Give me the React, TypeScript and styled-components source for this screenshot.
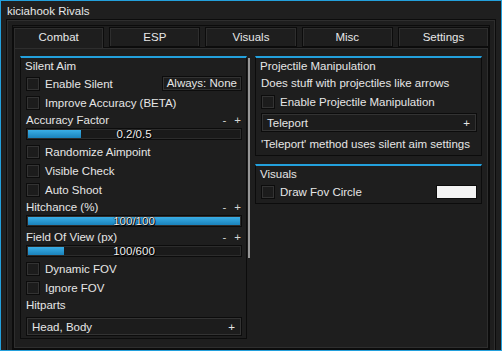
import React from 'react';
import styled, { createGlobalStyle } from 'styled-components';

const BLUE = '#23a0dc';
const LINE = '#0c0c0c';
const EDGE = '#2e2e2e';

const GlobalStyle = createGlobalStyle`
    html, body {
        margin: 0;
        padding: 0;
        background: #1f1f1f;
    }
    * {
        box-sizing: border-box;
    }
`;

const Window = styled.div`
    width: 502px;
    height: 351px;
    border: 1px solid ${BLUE};
    background: #1f1f1f;
    display: flex;
    flex-direction: column;
    font-family: 'Liberation Sans', Arial, sans-serif;
    font-size: 11.5px;
    color: #e6e6e6;
    overflow: hidden;
`;

const TitleBar = styled.div`
    height: 18px;
    line-height: 20px;
    padding-left: 6px;
    color: #e8e8e8;
`;

const Body = styled.div`
    flex: 1;
    margin: 0 5px 4px 5px;
    border: 1px solid ${LINE};
    box-shadow: inset 0 0 0 1px ${EDGE};
    background: #1e1e1e;
    padding: 5px;
    display: flex;
`;

const TabFrame = styled.div`
    flex: 1;
    border: 1px solid ${LINE};
    background: #1e1e1e;
    padding-top: 1px;
    display: flex;
    flex-direction: column;
`;

const TabRow = styled.div`
    display: flex;
    gap: 5px;
    height: 21px;
`;

const Tab = styled.div<{ $active?: boolean }>`
    flex: 1;
    height: ${(p) => (p.$active ? '21px' : '20px')};
    border: 1px solid ${LINE};
    border-bottom: ${(p) => (p.$active ? 'none' : `1px solid ${LINE}`)};
    box-shadow: inset 1px 1px 0 ${EDGE}, inset -1px 0 0 ${EDGE};
    background: #1e1e1e;
    text-align: center;
    line-height: 19px;
    color: #e8e8e8;
    position: relative;
    z-index: ${(p) => (p.$active ? 1 : 0)};
`;

const Content = styled.div`
    flex: 1;
    margin-top: -1px;
    border: 1px solid ${LINE};
    box-shadow: inset 0 0 0 1px ${EDGE};
    background: #1e1e1e;
    padding: 8px 6px 9px 6px;
    display: flex;
    gap: 5px;
    min-height: 0;
`;

const LeftColumn = styled.div`
    display: flex;
    width: 230px;
    min-height: 0;
`;

const ScrollArea = styled.div`
    width: 227px;
    overflow: hidden;
`;

const ScrollTrack = styled.div`
    width: 3px;
    padding-top: 2px;
`;

const ScrollThumb = styled.div`
    width: 2px;
    margin-left: 1px;
    height: 200px;
    background: #969696;
`;

const RightColumn = styled.div`
    width: 227px;
    display: flex;
    flex-direction: column;
    gap: 8px;
`;

const Section = styled.div`
    border: 1px solid ${LINE};
    border-top: 2px solid ${BLUE};
    background: #1e1e1e;
    padding: 0 4px 2px 5px;
    display: flex;
    flex-direction: column;
`;

const SectionTitle = styled.div`
    height: 16px;
    line-height: 16px;
    margin-left: -1px;
`;

const Text = styled.div<{ $h?: number; $mt?: number }>`
    height: ${(p) => p.$h ?? 16}px;
    line-height: ${(p) => p.$h ?? 16}px;
    margin-top: ${(p) => p.$mt ?? 0}px;
    white-space: nowrap;
`;

const CheckRow = styled.div`
    height: 19px;
    display: flex;
    align-items: center;
    gap: 5px;
`;

const Box = styled.div`
    width: 14px;
    height: 14px;
    flex: none;
    border: 1px solid ${LINE};
    box-shadow: inset 0 0 0 1px #333;
    background: #1c1c1c;
`;

const Label = styled.span`
    flex: 1;
    white-space: nowrap;
`;

const Pill = styled.div`
    height: 15px;
    padding: 0 4px;
    border: 1px solid ${LINE};
    box-shadow: inset 0 0 0 1px #333;
    background: #1c1c1c;
    line-height: 13px;
    text-align: center;
`;

const Swatch = styled.div`
    width: 41px;
    height: 14px;
    border: 1px solid ${LINE};
    background: #f3f3f3;
`;

const SliderHead = styled.div`
    height: 16px;
    display: flex;
    align-items: center;
    justify-content: space-between;
`;

const Steps = styled.span`
    display: flex;
    gap: 8px;
    color: #d6d6d6;
    padding-right: 1px;
`;

const Track = styled.div`
    height: 12px;
    margin-bottom: 2px;
    border: 1px solid ${LINE};
    box-shadow: inset 0 0 0 1px #2c2c2c;
    background: #1a1a1a;
    padding: 1px;
    position: relative;
`;

const Fill = styled.div`
    height: 100%;
    background: linear-gradient(#3aaee6, #1a82bb);
`;

const TrackText = styled.div`
    position: absolute;
    inset: 0;
    text-align: center;
    line-height: 11px;
    color: #f2f2f2;
    text-shadow: 0 0 1px #000, 0 0 1px #000, 1px 1px 0 #000;
`;

const Select = styled.div<{ $h?: number; $mt?: number }>`
    height: ${(p) => p.$h ?? 19}px;
    margin-top: ${(p) => p.$mt ?? 0}px;
    border: 1px solid ${LINE};
    box-shadow: inset 0 0 0 1px #333;
    background: #1c1c1c;
    display: flex;
    align-items: center;
    justify-content: space-between;
    padding: 0 6px 0 5px;
    flex: none;
`;

const Check = ({ label, children }: { label: string; children?: React.ReactNode }) => (
    <CheckRow>
        <Box />
        <Label>{label}</Label>
        {children}
    </CheckRow>
);

const Slider = ({ label, value, pct }: { label: string; value: string; pct: number }) => (
    <>
        <SliderHead>
            <span>{label}</span>
            <Steps>
                <span>-</span>
                <span>+</span>
            </Steps>
        </SliderHead>
        <Track>
            <Fill style={{ width: `${pct}%` }} />
            <TrackText>{value}</TrackText>
        </Track>
    </>
);

const tabs = ['Combat', 'ESP', 'Visuals', 'Misc', 'Settings'];

export default function App() {
    return (
        <>
            <GlobalStyle />
            <Window>
                <TitleBar>kiciahook Rivals</TitleBar>
                <Body>
                    <TabFrame>
                        <TabRow>
                            {tabs.map((t, i) => (
                                <Tab key={t} $active={i === 0}>
                                    {t}
                                </Tab>
                            ))}
                        </TabRow>
                        <Content>
                            <LeftColumn>
                                <ScrollArea>
                                    <Section>
                                        <SectionTitle>Silent Aim</SectionTitle>
                                        <Check label="Enable Silent">
                                            <Pill>Always: None</Pill>
                                        </Check>
                                        <Check label="Improve Accuracy (BETA)" />
                                        <Slider label="Accuracy Factor" value="0.2/0.5" pct={25} />
                                        <Check label="Randomize Aimpoint" />
                                        <Check label="Visible Check" />
                                        <Check label="Auto Shoot" />
                                        <Slider label="Hitchance (%)" value="100/100" pct={100} />
                                        <Slider label="Field Of View (px)" value="100/600" pct={17} />
                                        <Check label="Dynamic FOV" />
                                        <Check label="Ignore FOV" />
                                        <Text>Hitparts</Text>
                                        <Select $mt={4}>
                                            <span>Head, Body</span>
                                            <span>+</span>
                                        </Select>
                                    </Section>
                                </ScrollArea>
                                <ScrollTrack>
                                    <ScrollThumb />
                                </ScrollTrack>
                            </LeftColumn>
                            <RightColumn>
                                <Section>
                                    <SectionTitle>Projectile Manipulation</SectionTitle>
                                    <Text $h={18}>Does stuff with projectiles like arrows</Text>
                                    <Check label="Enable Projectile Manipulation" />
                                    <Select $mt={2}>
                                        <span>Teleport</span>
                                        <span>+</span>
                                    </Select>
                                    <Text $mt={4} $h={17}>'Teleport' method uses silent aim settings</Text>
                                </Section>
                                <Section>
                                    <SectionTitle>Visuals</SectionTitle>
                                    <Check label="Draw Fov Circle">
                                        <Swatch />
                                    </Check>
                                </Section>
                            </RightColumn>
                        </Content>
                    </TabFrame>
                </Body>
            </Window>
        </>
    );
}
